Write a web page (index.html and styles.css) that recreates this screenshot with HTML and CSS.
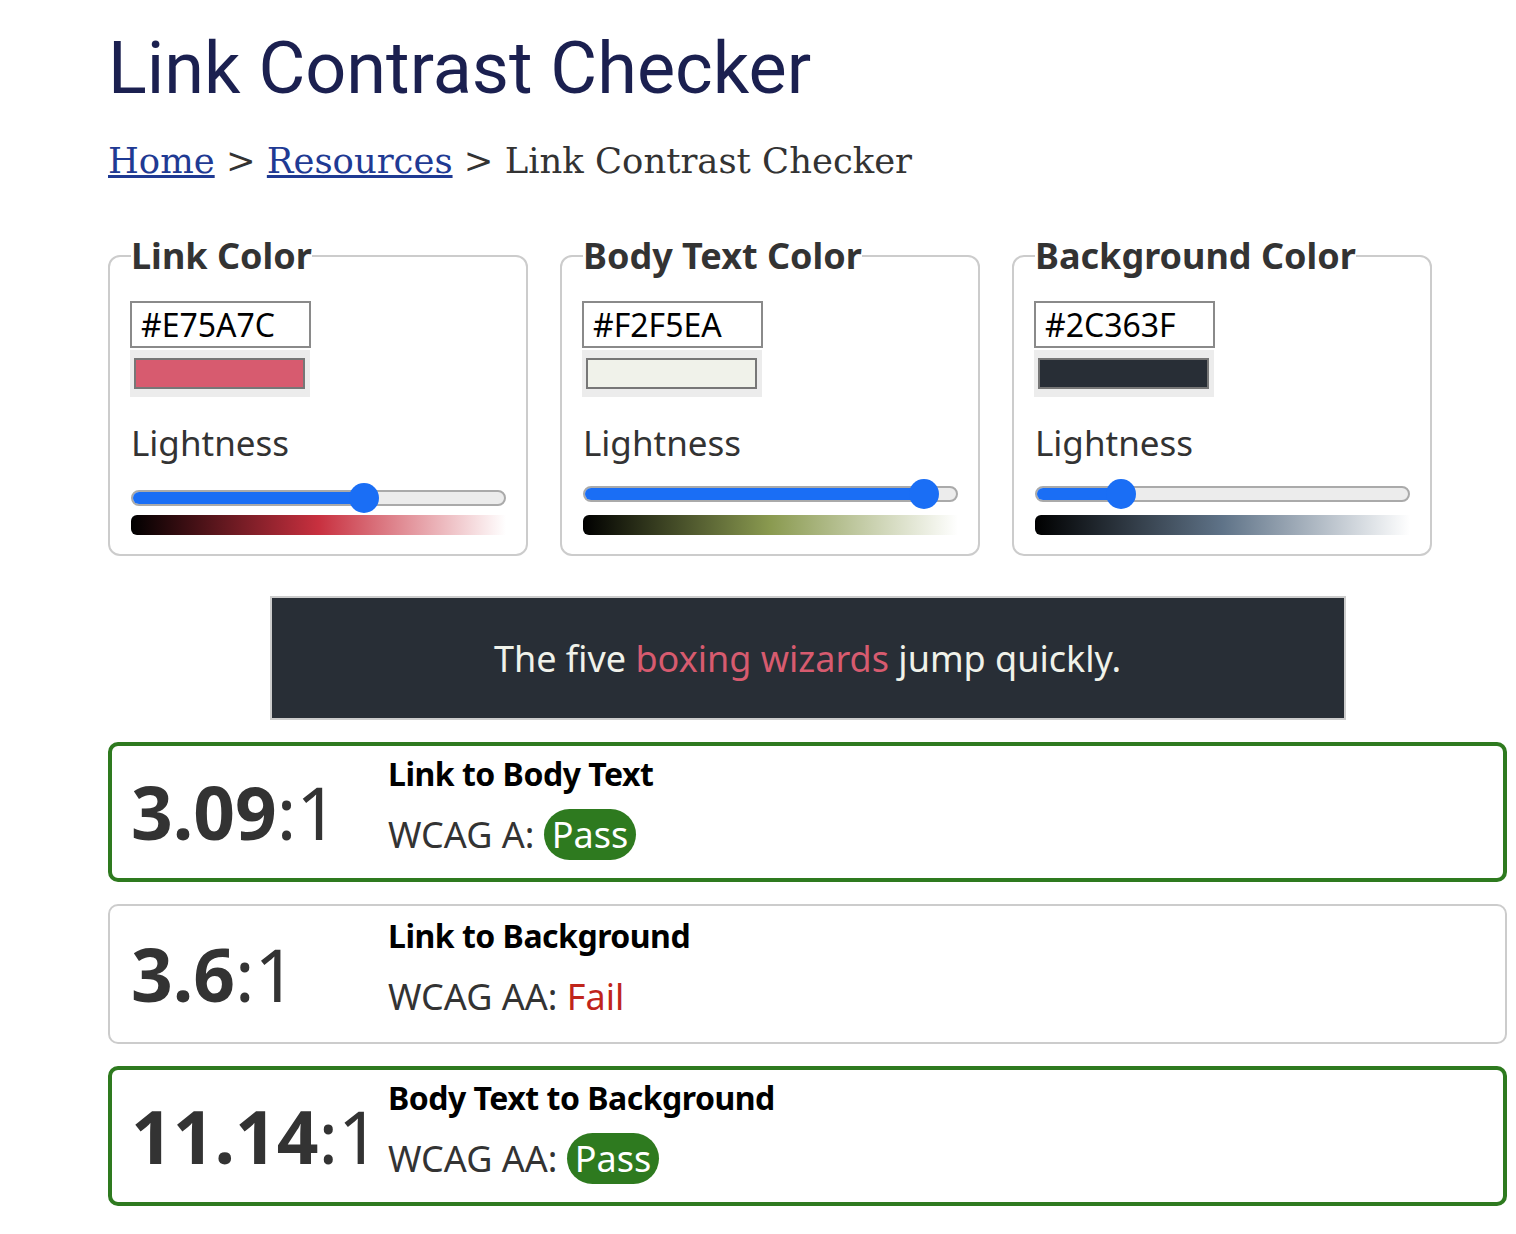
FILE: index.html
```html
<!DOCTYPE html>
<html lang="en">
<head>
<meta charset="utf-8">
<title>Link Contrast Checker</title>
<link rel="stylesheet" href="styles.css">
</head>
<body>
<main class="page">
  <h1 class="title">Link Contrast Checker</h1>
  <nav class="crumbs"><a href="#">Home</a> &gt; <a href="#">Resources</a> &gt; Link Contrast Checker</nav>

  <div class="pickers">
    <fieldset class="picker">
      <legend>Link Color</legend>
      <div class="hex">#E75A7C</div>
      <div class="swatch-wrap"><div class="swatch" style="background:#d75b6f"></div></div>
      <div class="label">Lightness</div>
      <div class="slider">
        <div class="track"><div class="fill" style="width:62%"></div></div>
        <div class="thumb" style="left:calc(62% - 15px)"></div>
      </div>
      <div class="grad grad-link"></div>
    </fieldset>

    <fieldset class="picker">
      <legend>Body Text Color</legend>
      <div class="hex">#F2F5EA</div>
      <div class="swatch-wrap"><div class="swatch" style="background:#f0f2ea"></div></div>
      <div class="label">Lightness</div>
      <div class="slider slider-high">
        <div class="track"><div class="fill" style="width:91%"></div></div>
        <div class="thumb" style="left:calc(91% - 15px)"></div>
      </div>
      <div class="grad grad-body"></div>
    </fieldset>

    <fieldset class="picker">
      <legend>Background Color</legend>
      <div class="hex">#2C363F</div>
      <div class="swatch-wrap"><div class="swatch" style="background:#282e36"></div></div>
      <div class="label">Lightness</div>
      <div class="slider slider-high">
        <div class="track"><div class="fill" style="width:23%"></div></div>
        <div class="thumb" style="left:calc(23% - 15px)"></div>
      </div>
      <div class="grad grad-bg"></div>
    </fieldset>
  </div>

  <div class="preview">
    <p>The five <a href="#">boxing wizards</a> jump quickly.</p>
  </div>

  <section class="results">
    <div class="result pass">
      <div class="ratio"><b>3.09</b>:1</div>
      <div class="info">
        <div class="rtitle">Link to Body Text</div>
        <div class="level">WCAG A: <span class="badge">Pass</span></div>
      </div>
    </div>
    <div class="result neutral">
      <div class="ratio"><b>3.6</b>:1</div>
      <div class="info">
        <div class="rtitle">Link to Background</div>
        <div class="level">WCAG AA: <span class="fail">Fail</span></div>
      </div>
    </div>
    <div class="result pass">
      <div class="ratio"><b>11.14</b>:1</div>
      <div class="info">
        <div class="rtitle">Body Text to Background</div>
        <div class="level">WCAG AA: <span class="badge">Pass</span></div>
      </div>
    </div>
  </section>
</main>
</body>
</html>
```

FILE: styles.css
```css
* { box-sizing: border-box; }

body {
  margin: 0;
  background: #fff;
  font-family: "Noto Sans", "Open Sans", sans-serif;
  color: #333;
}

.page {
  padding: 0 9px 30px 108px;
}

.title {
  margin: 0;
  padding-top: 26px;
  font-family: Roboto, sans-serif;
  font-weight: 400;
  font-size: 72px;
  line-height: 86px;
  color: #1b2050;
}

.crumbs {
  margin-top: 29px;
  font-family: "DejaVu Serif", serif;
  font-size: 35.4px;
  line-height: 40px;
  color: #333;
}
.crumbs a { color: #1f3a93; }

.pickers {
  display: flex;
  gap: 32px;
  margin-top: 53px;
}

.picker {
  width: 420px;
  margin: 0;
  padding: 0 20px 19px 21px;
  border: 2px solid #ccc;
  border-radius: 12px;
}

.picker legend {
  padding: 0;
  font-weight: 700;
  font-size: 36px;
  line-height: 43px;
  color: #333;
}

.hex {
  width: 181px;
  height: 47px;
  margin-top: 24px;
  margin-left: -1px;
  padding-left: 9px;
  border: 2px solid #8a8a8a;
  font-size: 32px;
  line-height: 43px;
  color: #000;
}

.swatch-wrap {
  width: 180px;
  height: 47px;
  margin-left: -1px;
  margin-top: 2px;
  padding: 8px 5px 8px 4px;
  background: #ececec;
}
.swatch {
  height: 31px;
  border: 2px solid #777;
}

.label {
  margin-top: 22px;
  font-size: 35px;
  line-height: 48px;
  color: #333;
}

.slider {
  position: relative;
  height: 30px;
  margin-top: 16px;
  margin-bottom: 2px;
}
.slider-high {
  margin-top: 12px;
  margin-bottom: 6px;
}
.track {
  position: absolute;
  left: 0;
  right: 0;
  top: 7px;
  height: 16px;
  border: 2px solid #aaa;
  border-radius: 8px;
  background: #ececec;
  overflow: hidden;
}
.fill {
  height: 100%;
  background: #1a6ef5;
}
.thumb {
  position: absolute;
  top: 0;
  width: 30px;
  height: 30px;
  border-radius: 50%;
  background: #1a6ef5;
}

.grad {
  height: 20px;
  border-radius: 6px 0 0 6px;
}
.grad-link { background: linear-gradient(to right, #000 0%, #c8303f 50%, #fff 100%); }
.grad-body { background: linear-gradient(to right, #000 0%, #8a9a50 50%, #fff 100%); }
.grad-bg { background: linear-gradient(to right, #000 0%, #5f7388 50%, #fff 100%); }

.preview {
  width: 1076px;
  height: 124px;
  margin: 40px auto 0;
  border: 2px solid #ccc;
  background: #282e36;
  display: flex;
  align-items: center;
  justify-content: center;
}
.preview p {
  margin: 0;
  font-size: 36px;
  color: #f0f2ea;
}
.preview a {
  color: #d75b6f;
  text-decoration: none;
}

.results {
  display: flex;
  flex-direction: column;
  gap: 22px;
  margin-top: 22px;
}

.result {
  display: flex;
  height: 140px;
  padding: 0 0 0 19px;
  border: 4px solid #2e7a1f;
  border-radius: 10px;
}
.result.neutral {
  border: 2px solid #ccc;
  padding: 2px 0 0 21px;
}

.ratio {
  flex: none;
  width: 257px;
  padding-top: 26px;
  font-size: 73px;
  line-height: 80px;
  color: #333;
}
.ratio b { font-weight: 700; }

.info {
  padding-top: 6px;
}
.rtitle {
  font-size: 32px;
  font-weight: 700;
  line-height: 44px;
  letter-spacing: -0.5px;
  color: #000;
}
.level {
  margin-top: 13px;
  font-size: 36px;
  line-height: 51px;
  color: #333;
}
.badge {
  display: inline-block;
  padding: 0 8px;
  border-radius: 26px;
  background: #2e7a1f;
  color: #fff;
}
.fail { color: #c0251b; }
```
